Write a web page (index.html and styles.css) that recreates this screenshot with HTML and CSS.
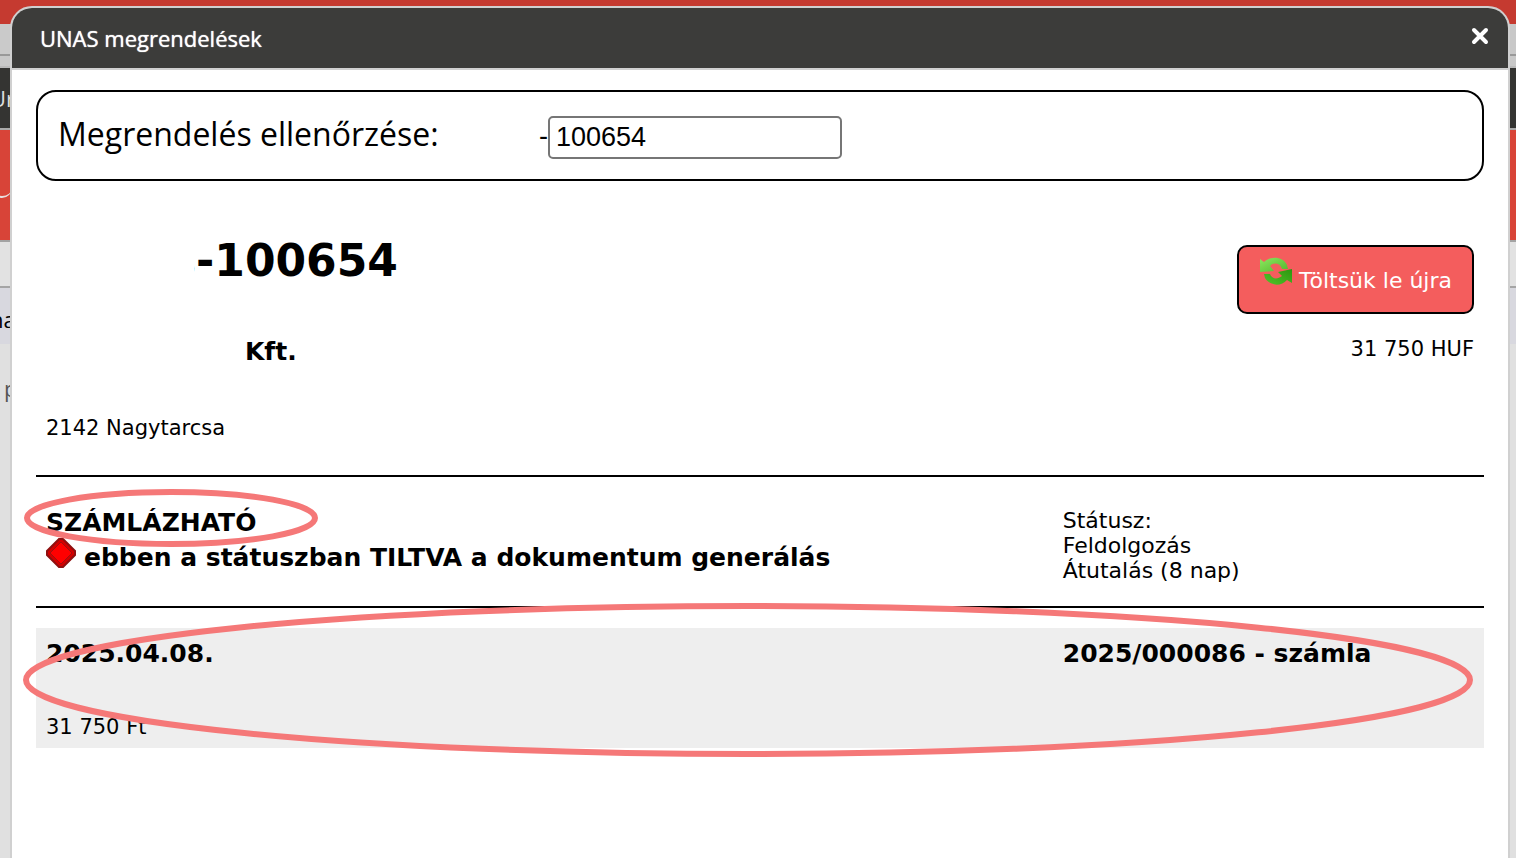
FILE: index.html
```html
<!DOCTYPE html>
<html lang="hu">
<head>
<meta charset="utf-8">
<title>UNAS megrendelések</title>
<link rel="stylesheet" href="styles.css">
</head>
<body>
<div class="backdrop" aria-hidden="true">
  <div class="band band-top"></div>
  <div class="band band-tabs"></div>
  <div class="band band-gap"></div>
  <div class="band band-dark"><span class="peek peek-light">Ur</span></div>
  <div class="band band-red"><span class="peek-box"></span></div>
  <div class="band band-filter"></div>
  <div class="band band-row"><span class="peek">na</span></div>
  <div class="band band-rest"><span class="peek peek-grey">p</span></div>
</div>
<main class="modal">
  <header class="modal-head">
    <h1 class="modal-title">UNAS megrendelések</h1>
    <button class="close" type="button" aria-label="Bezárás">
      <svg width="20" height="20" viewBox="0 0 20 20"><path d="M4 4L16 16M16 4L4 16" stroke="#fff" stroke-width="4" stroke-linecap="round"/></svg>
    </button>
  </header>
  <div class="modal-body">
    <form class="search">
      <label class="search-label" for="order">Megrendelés ellenőrzése:</label>
      <span class="dash">-</span>
      <input class="search-input" id="order" type="text" value="100654">
    </form>
    <section class="order">
      <div class="order-info">
        <h2 class="order-number"><span class="cut">s</span>-100654</h2>
        <p class="company">Kft.</p>
        <p class="address">2142 Nagytarcsa</p>
      </div>
      <div class="order-side">
        <button class="reload" type="button">
          <svg class="reload-icon" width="34" height="30" viewBox="0 0 34 30">
            <defs>
              <linearGradient id="light" x1="0" y1="0" x2="1" y2="1"><stop offset="0" stop-color="#8be85f"/><stop offset="1" stop-color="#55b52d"/></linearGradient>
              <linearGradient id="dark" x1="0" y1="1" x2="1" y2="0"><stop offset="0" stop-color="#52c42a"/><stop offset="1" stop-color="#2c960f"/></linearGradient>
            </defs>
            <path d="M1 3L5 6C11 0 24 0 28 9L29 13L23 13C21 7 15 6 11 10L15 15L1 16Z" fill="url(#light)"/>
            <path d="M33 27L28 24C22 31 11 30 6 22L5 18L11 18C13 23 18 24 23 20L19 16L33 13Z" fill="url(#dark)"/>
          </svg>
          <span>Töltsük le újra</span>
        </button>
        <p class="amount">31 750 HUF</p>
      </div>
    </section>
    <section class="status">
      <div class="status-main">
        <p class="marked">SZÁMLÁZHATÓ<svg class="ring" aria-hidden="true"><ellipse cx="50%" cy="50%" rx="50%" ry="50%"/></svg></p>
        <p class="blocked">
          <svg class="diamond" width="30" height="30" viewBox="0 0 30 30"><path d="M13 1H17L29 13V17L17 29H13L1 17V13Z" fill="#d40000" stroke="#8f1010" stroke-width="2"/><path d="M15 4L26 15L15 26L4 15Z" fill="#f00" stroke="#a01010" stroke-width="1"/></svg>
          <span>ebben a státuszban TILTVA a dokumentum generálás</span>
        </p>
      </div>
      <div class="status-side">
        <p>Státusz:</p>
        <p>Feldolgozás</p>
        <p>Átutalás (8 nap)</p>
      </div>
    </section>
    <section class="invoice">
      <div>
        <p class="strong">2025.04.08.</p>
        <p class="total">31 750 Ft</p>
      </div>
      <p class="strong">2025/000086 - számla</p>
      <svg class="ring ring-wide" aria-hidden="true"><ellipse cx="50%" cy="50%" rx="50%" ry="50%"/></svg>
    </section>
  </div>
</main>
</body>
</html>
```
FILE: styles.css
```css
* { box-sizing: border-box; }
html, body { height: 100%; }
body {
  margin: 0;
  overflow: hidden;
  position: relative;
  color: #000;
  background: #e0e0e0;
  font-family: "DejaVu Sans", Verdana, sans-serif;
  font-size: 21px;
  line-height: 25px;
}
h1, h2, p { margin: 0; }

.backdrop {
  position: absolute;
  inset: 0;
  display: flex;
  flex-direction: column;
  font-family: "Open Sans", sans-serif;
  font-size: 22px;
}
.band { overflow: hidden; display: flex; align-items: center; }
.band-top { height: 24px; background: #c53a30; }
.band-tabs { height: 32px; background: linear-gradient(90deg, #cacaca 50%, #c8c8c8 50%); border-bottom: 2px solid #999; }
.band-gap { height: 12px; background: #c8c8c8; border-bottom: 2px solid #bababa; }
.band-dark { height: 62px; background: #343432; border-bottom: 2px solid #aaa; }
.band-red { height: 112px; align-items: flex-start; background: #d84438; border-bottom: 2px solid #a3a3a3; }
.band-filter { height: 46px; background: #e2e2e2; border-bottom: 2px solid #a5a5a5; }
.band-row { height: 56px; background: #d8d8df; padding-top: 6px; }
.band-rest { flex: 1; align-items: flex-start; padding: 32px 0 0 4px; }
.peek { margin-left: -10px; }
.peek-light { color: #ddd; }
.peek-grey { margin-left: 0; color: #555; }
.peek-box {
  width: 20px;
  height: 16px;
  margin: 52px 0 0 -8px;
  border-bottom: 2px solid #e8e0e0;
  border-radius: 0 0 10px 10px;
}

.modal {
  position: relative;
  min-height: 100%;
  margin: 6px 6px 0 10px;
  background: #fff;
  border: 2px solid #d0d0d0;
  border-radius: 22px 22px 0 0;
}
.modal-head {
  display: flex;
  justify-content: space-between;
  align-items: center;
  height: 62px;
  padding: 0 18px 0 28px;
  background: #3c3c3a;
  border-bottom: 2px solid #d0d0d0;
  border-radius: 20px 20px 0 0;
}
.modal-title {
  color: #fff;
  font: 500 22px/30px "Open Sans", sans-serif;
  text-shadow: 0 0 1px #fff;
}
.close {
  display: flex;
  padding: 0 0 4px;
  border: 0;
  background: none;
}
.modal-body { padding: 20px 24px; }

.search {
  display: flex;
  align-items: center;
  min-height: 91px;
  padding: 0 20px;
  border: 2px solid #000;
  border-radius: 20px;
}
.search-label {
  width: 481px;
  padding-bottom: 4px;
  font: 32px/44px "Open Sans", sans-serif;
}
.dash { font: 27px/40px "Liberation Sans", Arial, sans-serif; }
.search-input {
  width: 294px;
  height: 43px;
  margin-top: 4px;
  padding: 0 6px;
  border: 2px solid #767676;
  border-radius: 5px;
  background: #fff;
  color: #000;
  font: 27px "Liberation Sans", Arial, sans-serif;
}

.order {
  display: flex;
  justify-content: space-between;
  margin-top: 54px;
  padding: 10px 10px 34px;
  border-bottom: 2px solid #000;
}
.order-number {
  display: flex;
  padding-left: 148px;
  font-size: 44px;
  line-height: 32px;
}
.cut {
  display: flex;
  justify-content: flex-end;
  width: 2px;
  overflow: hidden;
}
.company {
  margin-top: 59px;
  padding-left: 199px;
  font-size: 25px;
  font-weight: 700;
  line-height: 32px;
}
.address { margin-top: 48px; }
.order-side {
  display: flex;
  flex-direction: column;
  align-items: flex-end;
}
.reload {
  display: flex;
  gap: 6px;
  height: 69px;
  padding: 9px 20px;
  border: 2px solid #000;
  border-radius: 10px;
  background: #f45d5d;
  color: #fff;
  font: 22px/50px "DejaVu Sans", Verdana, sans-serif;
}
.amount { margin-top: 23px; }

.status, .invoice {
  display: grid;
  grid-template-columns: 712fr 288fr;
  position: relative;
}
.status {
  padding: 31px 10px 23px;
  border-bottom: 2px solid #000;
}
.status-side { font-size: 22px; }
.marked, .blocked, .strong { font-size: 25px; font-weight: 700; line-height: 30px; }
.marked { position: relative; width: fit-content; }
.blocked { display: flex; gap: 8px; }
.blocked span { padding-top: 5px; }
.invoice {
  min-height: 120px;
  margin-top: 20px;
  padding: 11px 10px 8px;
  background: #eee;
}
.total { margin-top: 46px; }

.ring {
  position: absolute;
  left: -19px;
  top: -16px;
  width: 288px;
  height: 52px;
  overflow: visible;
  pointer-events: none;
  fill: none;
  stroke: #f57878;
  stroke-width: 6px;
}
.ring-wide {
  left: -10px;
  top: -22px;
  width: calc(100% - 4px);
  height: 148px;
}
```
